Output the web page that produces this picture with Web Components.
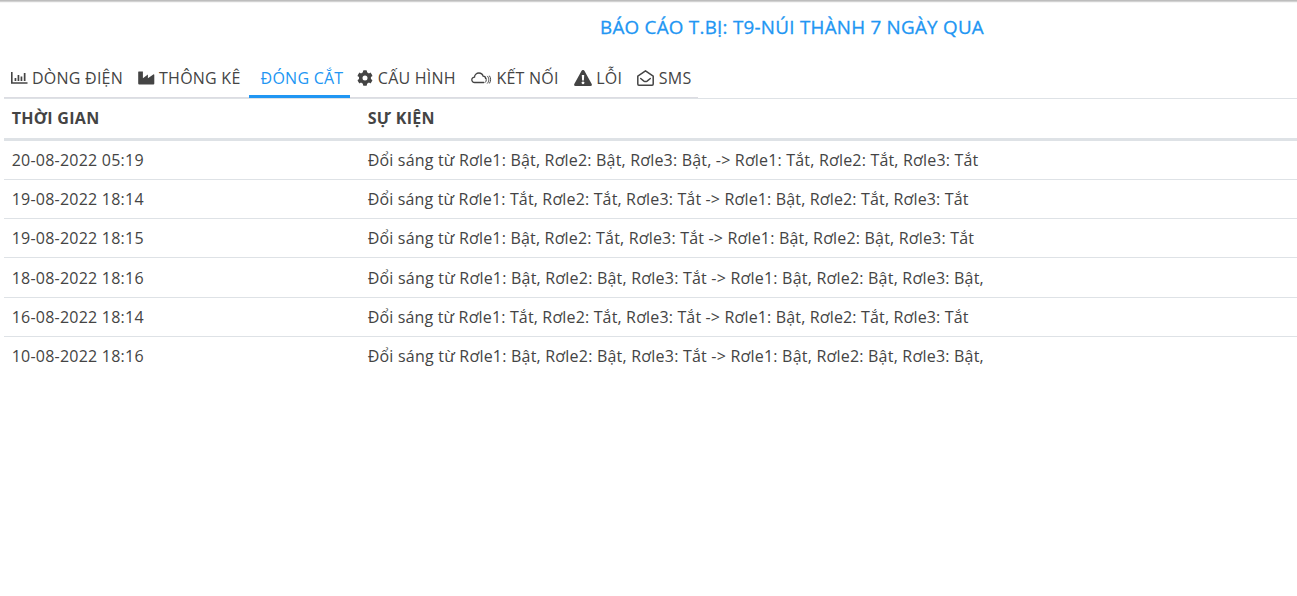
<!DOCTYPE html>
<html lang="vi">
<head>
<meta charset="utf-8">
<title>Báo cáo thiết bị</title>
<style>
  html, body { margin: 0; background: #fff; }
  body {
    height: 596px;
    overflow: hidden;
    color: #444;
    font: 400 16px/24px "Open Sans", "Noto Sans", sans-serif;
    letter-spacing: 0.23px;
  }
  tab-item[active] ~ tab-item { --icon-gap: 4.5px; }
</style>
</head>
<body>
<device-report heading="BÁO CÁO T.BỊ: T9-NÚI THÀNH 7 NGÀY QUA">
  <tab-bar slot="tabs">
    <tab-item icon="chart">DÒNG ĐIỆN</tab-item>
    <tab-item icon="factory">THÔNG KÊ</tab-item>
    <tab-item active>ĐÓNG CẮT</tab-item>
    <tab-item icon="gear">CẤU HÌNH</tab-item>
    <tab-item icon="cloud">KẾT NỐI</tab-item>
    <tab-item icon="warning">LỖI</tab-item>
    <tab-item icon="mail">SMS</tab-item>
  </tab-bar>
  <event-table></event-table>
</device-report>

<script>
const icons = {
  chart: `<svg width="17" height="16" viewBox="0 0 17 16">
    <path d="M.8 2v11h15.7" fill="none" stroke="currentColor" stroke-width="1.6"/>
    <path d="M3.6 8h1.7v3H3.6zM6.6 5h1.7v6H6.6zM9.6 6.5h1.7V11H9.6zM12.8 3h1.7v8h-1.7z"/></svg>`,
  factory: `<svg width="17" height="16" viewBox="0 0 17 16">
    <path d="M.7 1.5h4.2v6.7l5-3.7v3.7l5.4-3.7q1-.5 1 .6v8.4q0 1-1 1H1.2q-1 0-1-1V2q0-.5.5-.5z"/></svg>`,
  gear: `<svg width="16" height="16" viewBox="0 0 512 512">
    <path d="M487 316l-43-25c4-23 4-47 0-70l43-25c5-3 7-9 5-14-11-36-30-68-55-95-4-4-10-5-14-2l-43 24c-18-15-39-27-61-35V25c0-6-4-11-9-12-37-8-74-8-109 0-6 1-10 6-10 12v49c-22 8-43 20-61 35L88 85c-5-3-11-2-15 2-25 27-44 59-55 95-2 5 0 11 5 14l43 25c-4 23-4 47 0 70l-43 25c-5 3-7 9-5 14 11 36 30 68 55 95 4 4 10 5 15 2l42-24c18 15 39 27 61 35v49c0 6 4 11 10 12 36 8 73 8 109 0 5-1 9-6 9-12v-49c23-8 43-20 61-35l43 24c4 3 10 2 14-2 25-27 44-59 55-95 2-5 0-11-5-14zM256 336a80 80 0 1 1 0-160 80 80 0 0 1 0 160z"/></svg>`,
  cloud: `<svg width="21" height="16" viewBox="0 0 21 16" fill="none" stroke="currentColor" stroke-width="1.3" stroke-linecap="round">
    <path d="M12.8 12.5H3.7C2 12.5.8 11.4.8 9.8c0-1.5 1.1-2.6 2.7-2.6C3.6 4.8 5.6 3 7.9 3c2.1 0 3.7 1.2 4.2 3.2 1.5 0 2.5 1 2.5 2.3"/>
    <path d="M14.4 7.1c1.3 1.3 1.3 3.9 0 5.2M16.5 6.2c1.8 1.9 1.8 5.1 0 7M18.6 6c1.4 2 1.4 5.1 0 7.1" stroke-width="1"/></svg>`,
  warning: `<svg width="18" height="16" viewBox="0 0 18 16">
    <path fill-rule="evenodd" d="M7.6.8Q9-.9 10.4.8l7.3 13.1Q18.4 16 16.5 16h-15Q-.4 16 .3 13.9zM7.8 5l.3 5.4h1.8l.3-5.4zM9 11.4a1.4 1.4 0 1 0 .01 0z"/></svg>`,
  mail: `<svg width="17" height="16" viewBox="0 0 17 16" fill="none" stroke="currentColor" stroke-width="1.5" stroke-linejoin="round">
    <path d="M.8 6.1L8.5.8l7.7 5.3v8q0 1.1-1.1 1.1H1.9q-1.1 0-1.1-1.1z"/>
    <path d="M3.7 8.5l3.2 2.6q1.6 1 3.2 0l3.2-2.6" stroke-linecap="round"/></svg>`
};

class DeviceReport extends HTMLElement {
  constructor() {
    super();
    this.attachShadow({mode: 'open'});
    this.shadowRoot.innerHTML = `
      <style>
        :host { display: block; }
        .edge { height: 3px; background: linear-gradient(#bdbdbd 0 1px, #d2d2d2 1px 2px, #f5f5f5 2px); }
        h1 {
          box-sizing: border-box;
          margin: 0;
          padding: 12px 0 0 287px;
          height: 62px;
          text-align: center;
          font-size: 18.8px;
          line-height: 24px;
          font-weight: 500;
          letter-spacing: 0.27px;
          -webkit-text-stroke: 0.3px;
          color: #2196f3;
        }
        main { padding-left: 4px; }
      </style>
      <div class="edge"></div>
      <h1>${this.getAttribute('heading')}</h1>
      <main><slot name="tabs"></slot><slot></slot></main>
    `;
  }
}

class TabBar extends HTMLElement {
  constructor() {
    super();
    this.attachShadow({mode: 'open'});
    this.shadowRoot.innerHTML = `
      <style>
        :host {
          display: flex;
          width: 694px;
          height: 34px;
          margin-bottom: -1px;
          box-shadow: inset 0 -2px #dcdce2;
        }
      </style>
      <slot></slot>
    `;
  }
}

class TabItem extends HTMLElement {
  constructor() {
    super();
    this.attachShadow({mode: 'open'});
    const icon = icons[this.getAttribute('icon')] || '';
    this.shadowRoot.innerHTML = `
      <style>
        :host {
          box-sizing: border-box;
          display: flex;
          flex: none;
          align-items: center;
          gap: var(--icon-gap, 4px);
          height: 33px;
          padding: 0 8.1px 7px 7px;
          white-space: nowrap;
        }
        :host([active]) {
          padding-left: 12px;
          padding-right: 7px;
          color: #2196f3;
          box-shadow: inset 0 -3px #2196f3;
        }
        svg { flex: none; fill: currentColor; }
        svg[fill="none"] { fill: none; }
      </style>
      ${icon}<span><slot></slot></span>
    `;
  }
}

const events = [
  ['20-08-2022 05:19', 'Đổi sáng từ Rơle1: Bật, Rơle2: Bật, Rơle3: Bật, -> Rơle1: Tắt, Rơle2: Tắt, Rơle3: Tắt'],
  ['19-08-2022 18:14', 'Đổi sáng từ Rơle1: Tắt, Rơle2: Tắt, Rơle3: Tắt -> Rơle1: Bật, Rơle2: Tắt, Rơle3: Tắt'],
  ['19-08-2022 18:15', 'Đổi sáng từ Rơle1: Bật, Rơle2: Tắt, Rơle3: Tắt -> Rơle1: Bật, Rơle2: Bật, Rơle3: Tắt'],
  ['18-08-2022 18:16', 'Đổi sáng từ Rơle1: Bật, Rơle2: Bật, Rơle3: Tắt -> Rơle1: Bật, Rơle2: Bật, Rơle3: Bật,'],
  ['16-08-2022 18:14', 'Đổi sáng từ Rơle1: Tắt, Rơle2: Tắt, Rơle3: Tắt -> Rơle1: Bật, Rơle2: Tắt, Rơle3: Tắt'],
  ['10-08-2022 18:16', 'Đổi sáng từ Rơle1: Bật, Rơle2: Bật, Rơle3: Tắt -> Rơle1: Bật, Rơle2: Bật, Rơle3: Bật,']
];

function tracking(text) {
  return 0.228 - 0.0145 * (text.split('Tắt').length - 1);
}

class EventTable extends HTMLElement {
  constructor() {
    super();
    this.attachShadow({mode: 'open'});
    const rows = events.map(([time, text]) =>
      `<div class="row"><span>${time}</span><span style="letter-spacing: ${tracking(text)}px">${text.replace('>', '&gt;')}</span></div>`).join('');
    this.shadowRoot.innerHTML = `
      <style>
        :host { display: block; border-top: 1px solid #dee2e6; }
        .row {
          box-sizing: border-box;
          display: grid;
          grid-template-columns: 356px 1fr;
          align-items: center;
          height: 39.25px;
          padding-left: 7.7px;
          border-top: 1px solid #dee2e6;
        }
        .head {
          height: 42px;
          padding-bottom: 1px;
          border-top: 0;
          border-bottom: 3px solid #dee2e6;
          font-weight: 700;
          letter-spacing: 0.3px;
        }
        .head + .row { border-top: 0; height: 37.9px; }
      </style>
      <div class="row head"><span>THỜI GIAN</span><span>SỰ KIỆN</span></div>
      ${rows}
    `;
  }
}

customElements.define('device-report', DeviceReport);
customElements.define('tab-bar', TabBar);
customElements.define('tab-item', TabItem);
customElements.define('event-table', EventTable);
</script>
</body>
</html>
